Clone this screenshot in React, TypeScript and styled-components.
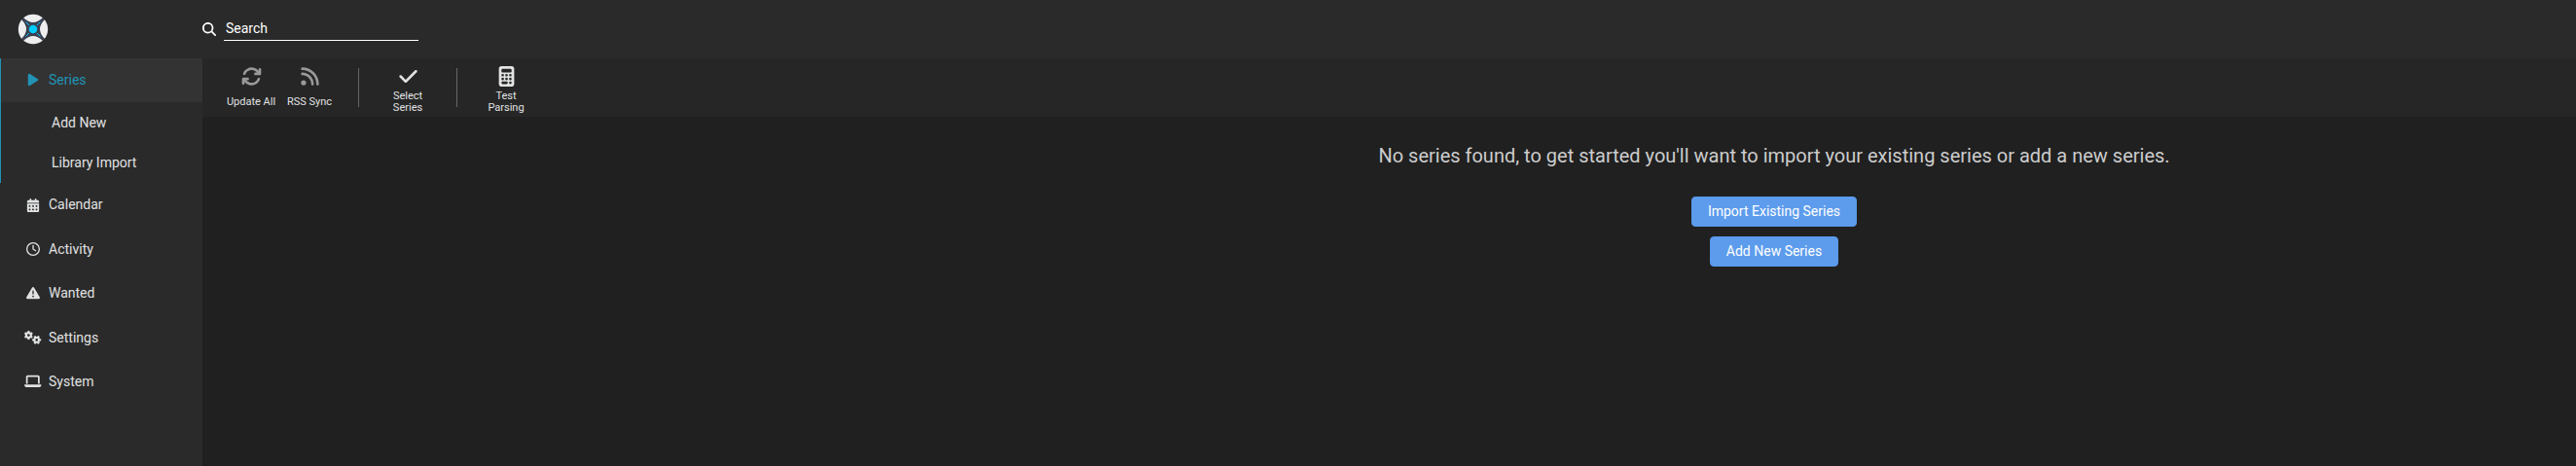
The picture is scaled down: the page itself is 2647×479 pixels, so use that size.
import React from 'react';
import styled, { createGlobalStyle } from 'styled-components';
import {
  FaPlay, FaCalendarDays, FaRegClock, FaTriangleExclamation, FaGears, FaLaptop,
  FaArrowsRotate, FaRss, FaCheck, FaCalculator, FaMagnifyingGlass,
} from 'react-icons/fa6';

const GlobalStyle = createGlobalStyle`
  * { box-sizing: border-box; }
  body {
    margin: 0;
    background: #202020;
    color: #ccc;
    font-family: Roboto, 'Open Sans', Arial, sans-serif;
    font-size: 14px;
    line-height: 1.52857143;
  }
`;

const Page = styled.div`
  display: flex;
  flex-direction: column;
  height: 100vh;
`;

const Header = styled.header`
  display: flex;
  align-items: center;
  flex: 0 0 60px;
  background: #2a2a2a;
  color: #fff;
`;

const LogoLink = styled.a`
  display: flex;
  align-items: center;
  flex: 0 0 208px;
  padding-left: 18px;
`;

const SearchField = styled.label`
  display: flex;
  align-items: center;
  gap: 8px;
  svg { display: block; }
`;

const SearchInput = styled.input`
  width: 200px;
  height: 23px;
  margin-top: 1px;
  padding: 0 0 2px 2px;
  border: none;
  border-bottom: 1px solid #fff;
  border-radius: 0;
  outline: none;
  background: none;
  color: #fff;
  font: inherit;
  line-height: 20px;
  &::placeholder { color: #fff; opacity: 1; }
`;

const Main = styled.div`
  display: flex;
  flex: 1;
  min-height: 0;
`;

const Sidebar = styled.nav`
  flex: 0 0 208px;
  background: #2a2a2a;
`;

const NavGroup = styled.div<{ $active?: boolean }>`
  border-left: 1px solid ${p => (p.$active ? '#2193b5' : 'transparent')};
`;

const NavLink = styled.a<{ $active?: boolean }>`
  display: flex;
  align-items: center;
  gap: 7px;
  margin-bottom: ${p => (p.$active ? '0.2px' : '0')};
  padding: 12px 24px;
  color: ${p => (p.$active ? '#2193b5' : '#e1e2e3')};
  background: ${p => (p.$active ? '#333' : 'transparent')};
`;

const NavIcon = styled.span`
  display: flex;
  justify-content: center;
  width: 18px;
  padding-bottom: 1px;
`;

const SubLink = styled.a`
  display: block;
  padding: 10px 24px 10px 52px;
  color: #e1e2e3;
`;

const Content = styled.main`
  display: flex;
  flex: 1;
  flex-direction: column;
`;

const Toolbar = styled.div`
  display: flex;
  flex: 0 0 60px;
  padding: 0 20px;
  background: #262626;
`;

const ToolButton = styled.button<{ $muted?: boolean }>`
  display: flex;
  flex-direction: column;
  align-items: center;
  width: 60px;
  padding: 8px 0 0;
  border: none;
  background: none;
  color: #e1e2e3;
  font: inherit;
  svg { display: block; flex: none; color: ${p => (p.$muted ? '#999' : '#e1e2e3')}; }
`;

const ToolLabel = styled.span`
  display: flex;
  align-items: center;
  justify-content: center;
  height: 24px;
  margin-top: 4px;
  font-size: 11px;
  line-height: 12px;
  text-align: center;
`;

const Separator = styled.div`
  width: 1px;
  margin: 10px 20px;
  background: #666;
`;

const EmptyState = styled.section`
  display: flex;
  flex-direction: column;
  align-items: center;
  padding: 20px 10px 0 801px;
`;

const Message = styled.p`
  margin: 5px 0 27px;
  font-size: 20px;
  line-height: 30px;
`;

const PrimaryButton = styled.button`
  height: 31px;
  margin-bottom: 10px;
  padding: 0 16px 2px;
  border: 1px solid #5899eb;
  border-radius: 4px;
  background: #5d9cec;
  color: #fff;
  font: inherit;
  line-height: 20px;
`;

const Logo = () => (
  <svg width="32" height="32" viewBox="0 0 32 32">
    <circle cx="16" cy="16" r="15.5" fill="#3a3f51" />
    {[0, 90, 180, 270].map(angle => (
      <path
        key={angle}
        fill="#eee"
        transform={`rotate(${angle} 16 16)`}
        d="M4.2 6.2A16 16 0 0 0 4.2 25.8Q13.8 16 4.2 6.2Z"
      />
    ))}
    <path stroke="#0cf" strokeWidth="1" d="M8.6 8.6 12 12M23.4 8.6 20 12M8.6 23.4 12 20M23.4 23.4 20 20" />
    <circle cx="16" cy="16" r="4.3" fill="#0cf" />
  </svg>
);

const sections = [
  { label: 'Calendar', icon: <FaCalendarDays size={14} /> },
  { label: 'Activity', icon: <FaRegClock size={14} /> },
  { label: 'Wanted', icon: <FaTriangleExclamation size={14} /> },
  { label: 'Settings', icon: <FaGears size={17.5} /> },
  { label: 'System', icon: <FaLaptop size={17.5} /> },
];

export default function App() {
  return (
    <Page>
      <GlobalStyle />
      <Header>
        <LogoLink><Logo /></LogoLink>
        <SearchField>
          <FaMagnifyingGlass size={14} />
          <SearchInput placeholder="Search" />
        </SearchField>
      </Header>
      <Main>
        <Sidebar>
          <NavGroup $active>
            <NavLink $active><NavIcon><FaPlay size={14} /></NavIcon>Series</NavLink>
            <SubLink>Add New</SubLink>
            <SubLink>Library Import</SubLink>
          </NavGroup>
          {sections.map(s => (
            <NavGroup key={s.label}>
              <NavLink><NavIcon>{s.icon}</NavIcon>{s.label}</NavLink>
            </NavGroup>
          ))}
        </Sidebar>
        <Content>
          <Toolbar>
            <ToolButton $muted><FaArrowsRotate size={21} /><ToolLabel>Update All</ToolLabel></ToolButton>
            <ToolButton $muted><FaRss size={21} /><ToolLabel>RSS Sync</ToolLabel></ToolButton>
            <Separator />
            <ToolButton><FaCheck size={21} /><ToolLabel>Select<br />Series</ToolLabel></ToolButton>
            <Separator />
            <ToolButton><FaCalculator size={21} /><ToolLabel>Test<br />Parsing</ToolLabel></ToolButton>
          </Toolbar>
          <EmptyState>
            <Message>No series found, to get started you'll want to import your existing series or add a new series.</Message>
            <PrimaryButton>Import Existing Series</PrimaryButton>
            <PrimaryButton>Add New Series</PrimaryButton>
          </EmptyState>
        </Content>
      </Main>
    </Page>
  );
}
